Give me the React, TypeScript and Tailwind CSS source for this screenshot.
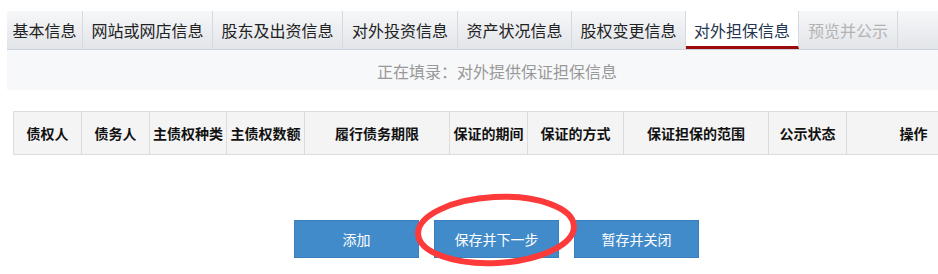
import React from "react";

const tabs = [
  { label: "基本信息", w: "w-[76px]" },
  { label: "网站或网店信息", w: "w-[130px]" },
  { label: "股东及出资信息", w: "w-[130px]" },
  { label: "对外投资信息", w: "w-[115px]" },
  { label: "资产状况信息", w: "w-[114px]" },
  { label: "股权变更信息", w: "w-[114px]" },
  { label: "对外担保信息", w: "w-[113px]", active: true },
  { label: "预览并公示", w: "w-[99px]", disabled: true },
];

const columns = [
  { label: "债权人", w: "w-[68px]" },
  { label: "债务人", w: "w-[68px]" },
  { label: "主债权种类", w: "w-[77px]" },
  { label: "主债权数额", w: "w-[78px]" },
  { label: "履行债务期限", w: "w-[145px]" },
  { label: "保证的期间", w: "w-[78px]" },
  { label: "保证的方式", w: "w-[96px]" },
  { label: "保证担保的范围", w: "w-[145px]" },
  { label: "公示状态", w: "w-[78px]" },
  { label: "操作", w: "w-[134px]" },
];

const App = () => {
  return (
    <div className="relative w-[938px] h-[274px] overflow-hidden bg-white font-['Microsoft_YaHei','Noto_Sans_CJK_SC',sans-serif]">
      {/* tab bar */}
      <div className="ml-[7px] mt-[11px] flex h-[39px] border-b border-[#c9d2dd] bg-gradient-to-b from-[#f6f7f9] to-[#e2e5e9]">
        {tabs.map((t) => (
          <div
            key={t.label}
            className={
              "flex items-center justify-center border-r border-[#d6dae0] text-[16px] " +
              t.w +
              (t.active
                ? " bg-white text-[#24364f] border-b-[3px] border-b-[#9b0a0c] pt-[3px]"
                : t.disabled
                ? " text-[#b3b3b3]"
                : " text-[#222]")
            }
          >
            {t.label}
          </div>
        ))}
      </div>

      {/* status line */}
      <div className="ml-[7px] h-[40px] bg-[#f7f8fa] pl-[370px] pt-[9px] text-[16px] text-[#999]">
        正在填录：对外提供保证担保信息
      </div>

      {/* table header */}
      <div className="ml-[13px] mt-[21px] flex h-[44px] w-[1000px] border border-[#dcdcdc] bg-[#f4f4f4]">
        {columns.map((c) => (
          <div
            key={c.label}
            className={
              "flex shrink-0 items-center justify-center border-r border-[#dcdcdc] text-[14px] font-bold text-[#111] " +
              c.w
            }
          >
            {c.label}
          </div>
        ))}
      </div>

      {/* buttons */}
      <div className="mt-[65px] flex gap-[15px] pl-[294px]">
        {["添加", "保存并下一步", "暂存并关闭"].map((b) => (
          <button
            key={b}
            className="h-[38px] w-[125px] border border-[#3a7fbd] bg-[#428bca] text-[14px] text-white"
          >
            {b}
          </button>
        ))}
      </div>

      {/* red annotation ellipse */}
      <svg
        className="pointer-events-none absolute left-0 top-0"
        width="938"
        height="274"
      >
        <ellipse
          cx="496"
          cy="230"
          rx="78"
          ry="33"
          fill="none"
          stroke="#fd3a3a"
          strokeWidth="6"
          transform="rotate(-3 496 230)"
        />
      </svg>
    </div>
  );
};

export default App;
